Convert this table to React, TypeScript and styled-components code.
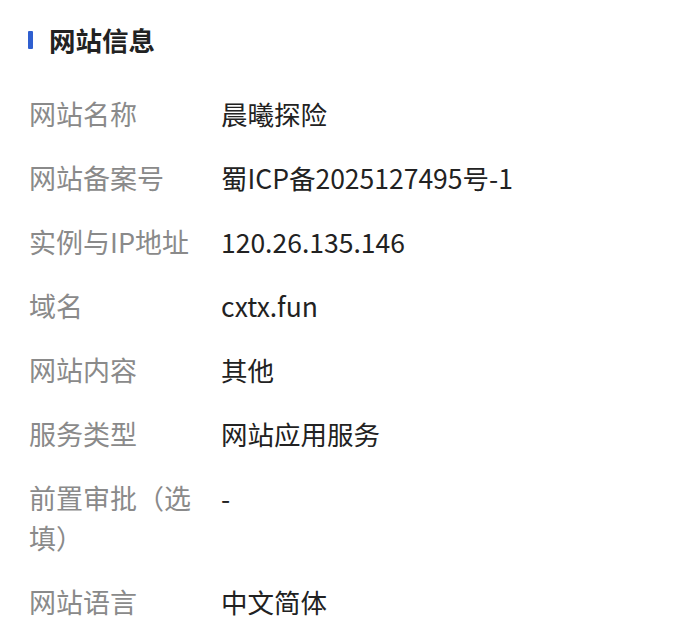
import React from "react";
import styled, { createGlobalStyle } from "styled-components";

const GlobalStyle = createGlobalStyle`
  body {
    margin: 0;
    background: #ffffff;
    font-family: "Noto Sans CJK SC", "Noto Sans", sans-serif;
  }
`;

type InfoItem = {
  label: string;
  value: string;
};

const items: InfoItem[] = [
  { label: "网站名称", value: "晨曦探险" },
  { label: "网站备案号", value: "蜀ICP备2025127495号-1" },
  { label: "实例与IP地址", value: "120.26.135.146" },
  { label: "域名", value: "cxtx.fun" },
  { label: "网站内容", value: "其他" },
  { label: "服务类型", value: "网站应用服务" },
  { label: "前置审批（选填）", value: "-" },
  { label: "网站语言", value: "中文简体" },
];

const Page = styled.div`
  width: 690px;
  height: 640px;
  padding: 24px 29px 0 28px;
  box-sizing: border-box;
  overflow: hidden;
`;

const Heading = styled.div`
  display: flex;
  align-items: center;
  gap: 16px;
  height: 32px;
  margin-bottom: 38px;
`;

const Bar = styled.span`
  width: 5px;
  height: 18px;
  background: #2f5fd0;
  border-radius: 1px;
`;

const Title = styled.h2`
  margin: 0;
  font-size: 26.5px;
  font-weight: 700;
  color: #222222;
  line-height: 32px;
`;

const List = styled.dl`
  margin: 0;
  display: flex;
  flex-direction: column;
  gap: 24px;
`;

const Row = styled.div`
  display: grid;
  grid-template-columns: 178px 1fr;
  column-gap: 14px;
  padding-left: 1px;
`;

const Label = styled.dt`
  margin: 0;
  font-size: 27px;
  line-height: 40px;
  color: #8a8a8a;
`;

const Value = styled.dd`
  margin: 0;
  font-size: 26.5px;
  line-height: 40px;
  color: #222222;
`;

export default function App() {
  return (
    <>
      <GlobalStyle />
      <Page>
        <Heading>
          <Bar />
          <Title>网站信息</Title>
        </Heading>
        <List>
          {items.map((item) => (
            <Row key={item.label}>
              <Label>{item.label}</Label>
              <Value>{item.value}</Value>
            </Row>
          ))}
        </List>
      </Page>
    </>
  );
}
